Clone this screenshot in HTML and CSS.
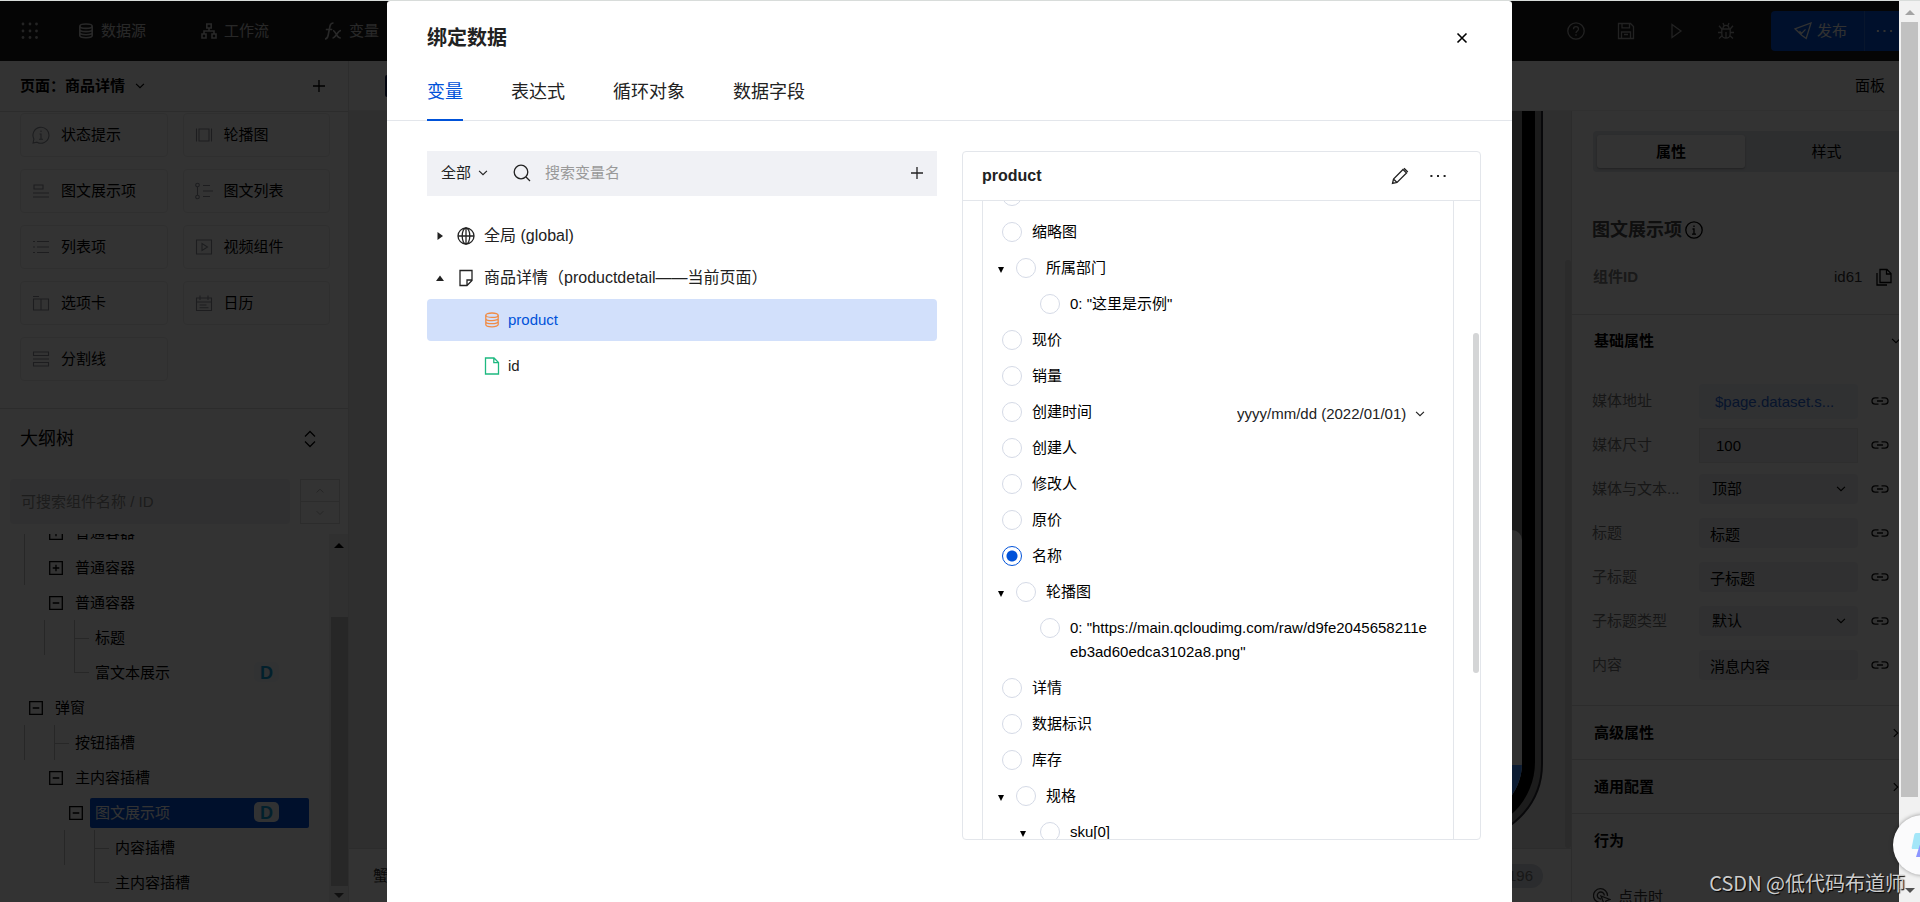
FILE: index.html
```html
<!DOCTYPE html>
<html lang="zh-CN">
<head>
<meta charset="utf-8">
<title>绑定数据</title>
<link rel="stylesheet" href="styles.css">
</head>
<body>
<svg class="sprite" aria-hidden="true">
  <symbol id="chev" viewBox="0 0 16 16"><path d="M3.5 5.5 8 10l4.5-4.5"/></symbol>
  <symbol id="chev-up" viewBox="0 0 16 16"><path d="M3.5 10 8 5.5l4.5 4.5"/></symbol>
  <symbol id="chev-r" viewBox="0 0 16 16"><path d="M5.5 3.5 10 8l-4.5 4.5"/></symbol>
  <symbol id="plus" viewBox="0 0 16 16"><path d="M8 2v12M2 8h12"/></symbol>
  <symbol id="db" viewBox="0 0 16 16"><ellipse cx="8" cy="3.2" rx="6.2" ry="2.2"/><path d="M1.8 3.2v9.4c0 1.2 2.8 2.2 6.2 2.2s6.2-1 6.2-2.2V3.2M1.8 6.4c0 1.2 2.8 2.2 6.2 2.2s6.2-1 6.2-2.2M1.8 9.5c0 1.2 2.8 2.2 6.2 2.2s6.2-1 6.2-2.2"/></symbol>
  <symbol id="link" viewBox="0 0 18 10"><path d="M7.5 1.8H4.2a3.2 3.2 0 0 0 0 6.4h3.3M10.5 1.8h3.3a3.2 3.2 0 0 1 0 6.4h-3.3M6 5h6"/></symbol>
  <symbol id="box-plus" viewBox="0 0 14 14"><path d="M.7.7h12.6v12.6H.7zM7 3.7v6.6M3.7 7h6.6"/></symbol>
  <symbol id="box-minus" viewBox="0 0 14 14"><path d="M.7.7h12.6v12.6H.7zM3.7 7h6.6"/></symbol>
  <symbol id="dots" viewBox="0 0 16 16"><path class="solid" d="M.4 7h2v2h-2zM7 7h2v2H7zM13.6 7h2v2h-2z"/></symbol>
</svg>

<div class="window">
<div class="app">
  <header class="topbar">
    <button class="top-icon apps" aria-label="应用"><svg width="18" height="18" viewBox="0 0 18 18"><g class="solid"><circle cx="2" cy="2" r="1.4"/><circle cx="9" cy="2" r="1.4"/><circle cx="15.500" cy="2" r="1.4"/><circle cx="2" cy="9" r="1.4"/><circle cx="9" cy="9" r="1.4"/><circle cx="15.500" cy="9" r="1.4"/><circle cx="2" cy="15.500" r="1.4"/><circle cx="9" cy="15.500" r="1.4"/><circle cx="15.500" cy="15.500" r="1.4"/></g></svg></button>
    <nav class="topnav">
      <a href="#ds"><svg class="bold" width="16" height="16"><use href="#db"/></svg>数据源</a>
      <a href="#flow"><svg class="bold" width="16" height="16" viewBox="0 0 16 16"><path d="M5.800 1h4.400v4H5.800zM1 11h4v4H1zM11 11h4v4h-4zM8 5v3M3 11V8h10v3"/></svg>工作流</a>
      <a href="#var"><svg class="bold" width="18" height="18" viewBox="0 0 18 18"><path d="M1 17c2.500 0 2.700-1.500 3.200-4L6 4c.4-2 1.200-3 3.500-3M1.800 7.500h6.500M9 8.500c3 0 3 7.500 7.800 7.500M17 8.500C13.500 8.500 12 16 8.500 16"/></svg>变量</a>
    </nav>
    <div class="tools">
      <button class="top-icon" aria-label="帮助"><svg width="18" height="18" viewBox="0 0 18 18"><circle cx="9" cy="9" r="8.200"/><path d="M6.500 7.200C6.500 3.800 11.500 4 11.500 7c0 1.800-2.500 2-2.500 4M9 12.300v1.500"/></svg></button>
      <button class="top-icon" aria-label="保存"><svg width="18" height="18" viewBox="0 0 18 18"><path d="M1.500 1.500h12l3 3v12h-15zM5 1.500v4.300h7.500V1.500M4.500 16v-6h9v6M7 12.500h4"/></svg></button>
      <button class="top-icon" aria-label="预览"><svg width="18" height="18" viewBox="0 0 18 18"><path d="M5 2.500v13L14 9z"/></svg></button>
      <button class="top-icon" aria-label="调试"><svg width="18" height="18" viewBox="0 0 18 18"><path d="M4.800 7h8.400v5a4.200 4.200 0 0 1-8.400 0zM6 6.800a3 3.500 0 0 1 6 0M9 10v6M1 10.500h3.800M13.200 10.500H17M2 3.800 4.800 7M16 3.800 13.200 7M2 16.500l3-2.700M16 16.500l-3-2.700M6 1l1 2.500M12 1l-1 2.500"/></svg></button>
    </div>
    <div class="publish">
      <button class="pub-main"><svg width="18" height="18" viewBox="0 0 18 18"><path d="M1 6.800 17 1l-4.800 15.500-4.500-3.300zM5.500 9.200l2.200 2.200 3.800-4"/></svg>发布</button>
      <button class="pub-more" aria-label="更多"><svg width="17" height="16"><use href="#dots"/></svg></button>
    </div>
  </header>

  <div class="workspace">
    <aside class="left">
      <div class="page-head"><button class="page-pick">页面：商品详情<svg width="14" height="14"><use href="#chev"/></svg></button><button aria-label="新建"><svg width="16" height="16"><use href="#plus"/></svg></button></div>
      <div class="palette">
        <button><svg width="18" height="18" viewBox="0 0 18 18"><path d="M1 17l.9-4A8 8 0 1 1 5 16.200zM9 4.500v1.500M7.500 8H9v5M7 13.200h4"/></svg>状态提示</button>
        <button><svg width="18" height="18" viewBox="0 0 18 18"><path d="M4 3h10v12H4zM1.500 2.500v13M16.500 2.500v13"/></svg>轮播图</button>
        <button><svg width="18" height="18" viewBox="0 0 18 18"><path d="M2 3h9v4H2zM1 11h16M1 15h16"/></svg>图文展示项</button>
        <button><svg width="18" height="18" viewBox="0 0 18 18"><circle cx="2.500" cy="3" r="1.800"/><circle cx="2.500" cy="15" r="1.800"/><path d="M2.500 5v8M8 3.500h7M8 9h10M8 14.500h7"/></svg>图文列表</button>
        <button><svg width="18" height="18" viewBox="0 0 18 18"><path d="M1 3.500h2M5 3.500h12M1 9h2M5 9h12M1 14.500h2M5 14.500h12"/></svg>列表项</button>
        <button><svg width="18" height="18" viewBox="0 0 18 18"><path d="M1.500 2h15v14h-15zM7 5.500v7L12.500 9z"/></svg>视频组件</button>
        <button><svg width="18" height="18" viewBox="0 0 18 18"><path d="M1.500 5h15v11h-15zM9 5v11M1 2.500h6"/></svg>选项卡</button>
        <button><svg width="18" height="18" viewBox="0 0 18 18"><path d="M1.500 4h15v12.500h-15zM1.500 8h15M5 1.500V6M13 1.500V6M4.500 11h7M4.500 13.800h9"/></svg>日历</button>
        <button><svg width="18" height="18" viewBox="0 0 18 18"><path d="M1.500 2h15v3.500h-15zM1 9h16M1.500 12.500h15V16h-15z"/></svg>分割线</button>
      </div>
      <div class="outline-head"><h2>大纲树</h2><button aria-label="展开"><svg width="14" height="18" viewBox="0 0 14 18"><path d="M2 6.500l5-5 5 5M2 11.500l5 5 5-5"/></svg></button></div>
      <div class="outline-search">
        <input type="text" aria-label="搜索组件" placeholder="可搜索组件名称 / ID">
        <div class="stepper"><button aria-label="上一个"><svg width="12" height="12"><use href="#chev-up"/></svg></button><button aria-label="下一个"><svg width="12" height="12"><use href="#chev"/></svg></button></div>
      </div>
      <div class="outline">
        <ul class="nodes">
          <li class="l1"><i class="guide"></i><svg width="14" height="14"><use href="#box-plus"/></svg><span>普通容器</span></li>
          <li class="l1"><i class="guide"></i><svg width="14" height="14"><use href="#box-plus"/></svg><span>普通容器</span></li>
          <li class="l2"><svg width="14" height="14"><use href="#box-minus"/></svg><span>普通容器</span></li>
          <li class="l3"><i class="guide wide"></i><i class="branch thru"></i>标题</li>
          <li class="l5"><i class="branch"></i>富文本展示<b class="tag">D</b></li>
          <li class="l0"><svg width="14" height="14"><use href="#box-minus"/></svg><span>弹窗</span></li>
          <li class="l1"><i class="guide wide"></i><i class="branch thru"></i>按钮插槽</li>
          <li class="l2"><svg width="14" height="14"><use href="#box-minus"/></svg><span>主内容插槽</span></li>
          <li class="l4"><svg width="14" height="14"><use href="#box-minus"/></svg><span class="picked">图文展示项</span><b class="tag">D</b></li>
          <li class="l6"><i class="guide wide"></i><i class="branch thru"></i>内容插槽</li>
          <li class="l7"><i class="branch"></i>主内容插槽</li>
        </ul>
        <div class="bar"><i class="tri up"></i><i class="thumb"></i><i class="tri down"></i></div>
      </div>
    </aside>

    <main class="main">
      <div class="strip"><i class="device"></i><a href="#panel">面板</a></div>
      <div class="stage-row">
        <section class="stage">
          <div class="canvas">
            <div class="phone"><div class="bezel"><div class="screen"><div class="sheet"><div class="foot"></div></div></div></div></div>
            <i class="stage-bar"></i>
          </div>
          <div class="stage-foot"><span>蟹</span><span class="zoom">196</span></div>
        </section>
        <aside class="props">
          <div class="seg"><button class="on">属性</button><button>样式</button></div>
          <h2>图文展示项<svg width="18" height="18" viewBox="0 0 18 18"><circle cx="9" cy="9" r="8.200"/><path d="M9 4.500V6M7.500 8H9v5M7 13.200h4"/></svg></h2>
          <div class="cid"><strong>组件ID</strong><span>id61</span><button aria-label="复制"><svg width="18" height="18" viewBox="0 0 18 18"><path d="M5 1.500h7l4 4v9H5zM11.500 1.500V6H16M2 5v12h10"/></svg></button></div>
          <section class="group">
            <h3>基础属性<svg width="14" height="14"><use href="#chev"/></svg></h3>
            <div class="field tall"><label for="f1">媒体地址</label><input id="f1" class="bound" type="text" value="$page.dataset.s..."><svg width="18" height="10"><use href="#link"/></svg></div>
            <div class="field tall"><label for="f2">媒体尺寸</label><input id="f2" class="num" type="text" value="100"><svg width="18" height="10"><use href="#link"/></svg></div>
            <div class="field"><label for="f3">媒体与文本...</label><span class="sel"><select id="f3"><option>顶部</option></select><svg width="14" height="14"><use href="#chev"/></svg></span><svg width="18" height="10"><use href="#link"/></svg></div>
            <div class="field"><label for="f4">标题</label><input id="f4" type="text" value="标题"><svg width="18" height="10"><use href="#link"/></svg></div>
            <div class="field"><label for="f5">子标题</label><input id="f5" type="text" value="子标题"><svg width="18" height="10"><use href="#link"/></svg></div>
            <div class="field"><label for="f6">子标题类型</label><span class="sel"><select id="f6"><option>默认</option></select><svg width="14" height="14"><use href="#chev"/></svg></span><svg width="18" height="10"><use href="#link"/></svg></div>
            <div class="field"><label for="f7">内容</label><input id="f7" type="text" value="消息内容"><svg width="18" height="10"><use href="#link"/></svg></div>
          </section>
          <h3 class="fold">高级属性<svg width="14" height="14"><use href="#chev-r"/></svg></h3>
          <h3 class="fold">通用配置<svg width="14" height="14"><use href="#chev-r"/></svg></h3>
          <h3 class="fold">行为</h3>
          <div class="event"><svg width="18" height="18" viewBox="0 0 18 18"><path d="M9 14.500A7 7 0 1 1 14.500 8M8 11a3.500 3.500 0 1 1 3.300-3.500M8 8l9 3.500-4 1.500-1.500 4z"/></svg>点击时</div>
        </aside>
      </div>
    </main>
  </div>
</div>

<div class="overlay">
  <div class="modal" role="dialog" aria-labelledby="dlg">
    <div class="modal-head"><h1 id="dlg">绑定数据</h1><button aria-label="关闭"><svg class="bold" width="16" height="16" viewBox="0 0 16 16"><path d="M3.500 3.500l9 9M12.500 3.500l-9 9"/></svg></button></div>
    <nav class="tabs"><button class="on">变量</button><button>表达式</button><button>循环对象</button><button>数据字段</button></nav>
    <div class="modal-body">
      <div class="vars">
        <div class="var-search">
          <span class="scope"><select aria-label="范围"><option>全部</option></select><svg width="14" height="14"><use href="#chev"/></svg></span>
          <svg width="18" height="18" viewBox="0 0 18 18"><circle cx="8" cy="8" r="6.800"/><path d="M13 13l4 4"/></svg>
          <input type="text" aria-label="搜索变量名" placeholder="搜索变量名">
          <button aria-label="新增"><svg width="16" height="16"><use href="#plus"/></svg></button>
        </div>
        <ul class="var-tree">
          <li class="root"><svg class="mark" width="10" height="10" viewBox="0 0 10 10"><path class="solid" d="M2.500 1v8L8 5z"/></svg><svg width="18" height="18" viewBox="0 0 18 18"><circle cx="9" cy="9" r="8"/><ellipse cx="9" cy="9" rx="3.800" ry="8"/><path d="M1 9h16M9 1v16"/></svg>全局 (global)</li>
          <li class="root"><svg class="mark" width="10" height="10" viewBox="0 0 10 10"><path class="solid" d="M1 8h8L5 2.500z"/></svg><svg width="18" height="18" viewBox="0 0 18 18"><path d="M3 1.500h12v10l-5 5H3zM10 16v-5h5"/></svg>商品详情（productdetail——当前页面）</li>
          <li class="leaf on"><svg class="orange" width="16" height="16"><use href="#db"/></svg>product</li>
          <li class="leaf"><svg class="green" width="16" height="18" viewBox="0 0 16 18"><path d="M1.500 1h8.500l4.500 4.500V17h-13zM9.800 1v4.700h4.700"/></svg>id</li>
        </ul>
      </div>
      <section class="card">
        <div class="card-head"><h2>product</h2><button aria-label="编辑"><svg width="18" height="18" viewBox="0 0 18 18"><path d="M1.500 16.500l1-4.500L12 2.500l3.500 3.500L6 15.500zM13 1.200 16.800 5M2.500 12 6 15.500"/></svg></button><button aria-label="更多"><svg width="16" height="16"><use href="#dots"/></svg></button></div>
        <div class="card-body">
          <div class="fields">
            <label class="row"><input type="radio" name="v"><span></span></label>
            <label class="row"><input type="radio" name="v"><span>缩略图</span></label>
            <label class="row arr"><i class="caret"></i><input type="radio" name="v"><span>所属部门</span></label>
            <label class="row sub"><input type="radio" name="v"><span>0: "这里是示例"</span></label>
            <label class="row"><input type="radio" name="v"><span>现价</span></label>
            <label class="row"><input type="radio" name="v"><span>销量</span></label>
            <div class="row split"><label><input type="radio" name="v"><span>创建时间</span></label><span class="fmt"><select aria-label="日期格式"><option>yyyy/mm/dd (2022/01/01)</option></select><svg width="14" height="14"><use href="#chev"/></svg></span></div>
            <label class="row"><input type="radio" name="v"><span>创建人</span></label>
            <label class="row"><input type="radio" name="v"><span>修改人</span></label>
            <label class="row"><input type="radio" name="v"><span>原价</span></label>
            <label class="row"><input type="radio" name="v" checked><span>名称</span></label>
            <label class="row arr"><i class="caret"></i><input type="radio" name="v"><span>轮播图</span></label>
            <label class="row sub"><input type="radio" name="v"><span>0: "https://main.qcloudimg.com/raw/d9fe2045658211eeb3ad60edca3102a8.png"</span></label>
            <label class="row"><input type="radio" name="v"><span>详情</span></label>
            <label class="row"><input type="radio" name="v"><span>数据标识</span></label>
            <label class="row"><input type="radio" name="v"><span>库存</span></label>
            <label class="row arr"><i class="caret"></i><input type="radio" name="v"><span>规格</span></label>
            <label class="row arr2"><i class="caret"></i><input type="radio" name="v"><span>sku[0]</span></label>
          </div>
          <i class="card-bar"></i>
        </div>
      </section>
    </div>
  </div>
</div>

<div class="scrollbar"><i class="tri up"></i><i class="thumb"></i><i class="tri down"></i></div>
<button class="assistant" aria-label="助手"><svg width="60" height="60" viewBox="0 0 60 60"><path class="cyan" d="M23 18h20l-5 16H20c-1.500 0-1.500-1-1-3l2-10c.3-2 1-3 2-3z"/><path class="violet" d="M28 26h16v16H23z"/></svg></button>
<div class="credit">CSDN @低代码布道师</div>
</div>
</body>
</html>
```

FILE: styles.css
```css
* { box-sizing: border-box; }
html, body { height: 100%; margin: 0; }
body {
  font: 15px/24px "Liberation Sans", "Noto Sans CJK SC", sans-serif;
  color: #000;
  overflow: hidden;
}
button, input, select {
  font: inherit; color: inherit; background: none; border: 0; padding: 0; margin: 0;
  outline: 0; appearance: none;
}
button { display: flex; align-items: center; }
a { color: inherit; text-decoration: none; }
ul { list-style: none; margin: 0; padding: 0; }
h1, h2, h3 { margin: 0; }
i { font-style: normal; }
svg { fill: none; stroke: currentColor; stroke-width: 1.3; flex: none; display: block; }
svg.bold { stroke-width: 1.6; }
.solid { fill: currentColor; stroke: none; }
.sprite { position: absolute; width: 0; height: 0; }

.window {
  position: relative; height: 100vh; overflow: hidden;
  display: grid; grid-template-columns: minmax(0, 1fr) 21px;
  border-top: 1px solid #d8dcda;
}
.app { grid-area: 1 / 1; display: flex; flex-direction: column; min-height: 0; height: calc(100vh - 1px); overflow: hidden; background: #fff; }

/* top bar */
.topbar { height: 60px; flex: none; background: #191919; color: #f5f5f5; display: flex; align-items: center; padding-left: 21px; }
.apps { width: 57px; opacity: .7; }
.topnav { display: flex; gap: 55px; flex: 1; }
.topnav a { display: flex; align-items: center; gap: 7px; opacity: .8; }
.tools { display: flex; gap: 32px; margin-right: 36px; opacity: .65; }
.publish { display: flex; height: 40px; background: #0052d9; border-radius: 4px 0 0 4px; }
.pub-main { gap: 5px; padding: 0 17px 0 23px; border-right: 1px solid #2a6ee0; }
.pub-more { padding-left: 11px; width: 34px; overflow: hidden; }

.workspace { flex: 1; display: flex; min-height: 0; }
.left { width: 349px; flex: none; display: flex; flex-direction: column; border-right: 1px solid #e0e0e0; }
.page-head { height: 51px; flex: none; border-bottom: 1px solid #dcdcdc; display: flex; align-items: center; justify-content: space-between; padding: 0 21px 0 20px; }
.page-pick { font-weight: bold; gap: 8px; }
.palette { display: grid; grid-template-columns: 1fr 1fr; gap: 12px 15px; padding: 1px 18px 27px 20px; border-bottom: 1px solid #dcdcdc; }
.palette button { height: 44px; border: 1px solid #ebebeb; border-radius: 4px; padding-left: 11px; gap: 11px; }
.palette svg { color: #8f939c; stroke-width: 1.1; }
.outline-head { display: flex; justify-content: space-between; align-items: center; height: 70px; flex: none; padding: 0 31px 10px 20px; }
.outline-head h2 { font-size: 18px; font-weight: normal; }
.outline-search { display: flex; gap: 10px; padding: 0 8px 0 10px; height: 45px; flex: none; }
.outline-search input { flex: 1; min-width: 0; background: #f1f1f2; border-radius: 4px; padding: 0 11px; }
.outline-search input::placeholder { color: #8c8c8c; }
.stepper { width: 40px; border: 1px solid #dcdcdc; display: flex; flex-direction: column; }
.stepper button { flex: 1; justify-content: center; color: #b4b4b4; }
.stepper button + button { border-top: 1px solid #dcdcdc; }
.outline { flex: 1; min-height: 0; margin-top: 10px; display: flex; overflow: hidden; }
.nodes { flex: 1; margin-top: -19px; }
.nodes li { height: 35px; display: flex; align-items: center; position: relative; white-space: nowrap; }
.nodes svg { margin-right: 12px; }
.l0 { padding-left: 29px; }
.l1 { padding-left: 24px; }
.l2 { padding-left: 49px; }
.l3 { padding-left: 44px; }
.l4 { padding-left: 69px; }
.l5 { padding-left: 74px; }
.l6 { padding-left: 64px; }
.l7 { padding-left: 94px; }
.guide { width: 25px; height: 35px; border-left: 1px solid #c4c4c4; }
.guide.wide { width: 30px; }
.branch { width: 21px; height: 35px; border-left: 1px solid #c4c4c4; background: linear-gradient(#c4c4c4, #c4c4c4) 0 18px / 14px 1px no-repeat; }
.branch:not(.thru) { height: 18px; align-self: flex-start; background-position: 0 100%; }
.nodes .l4 svg { margin-right: 7px; }
.picked { flex: 1; background: #0052d9; color: #fff; height: 30px; line-height: 30px; border-radius: 2px; padding-left: 5px; margin-right: 20px; }
.tag { position: absolute; left: 254px; top: 7px; width: 25px; height: 20px; border-radius: 5px; background: #f2f7ff; color: #0ea0dc; font: bold 18px/22px "Liberation Sans", sans-serif; text-align: center; }
.bar { width: 19px; background: #f1f1f1; display: flex; flex-direction: column; align-items: center; padding: 9px 0 4px; }
.bar .thumb { width: 17px; flex: 1; background: #c4c4c4; margin: 69px 0 7px 2px; }
.tri { width: 0; height: 0; border: 5px solid transparent; flex: none; }
.tri.up { border-top: 0; border-bottom-color: currentColor; }
.tri.down { border-bottom: 0; border-top-color: currentColor; }
.bar .down { color: #505050; }

/* stage */
.main { flex: 1; min-width: 0; display: flex; flex-direction: column; }
.strip { height: 50px; flex: none; display: flex; align-items: center; justify-content: space-between; padding: 0 14px 0 36px; border-bottom: 1px solid #f0f0f0; }
.device { width: 36px; height: 22px; border: 2px solid #0b1a4a; border-radius: 2px; }
.stage-row { flex: 1; min-height: 0; display: flex; }
.stage { flex: 1; min-width: 0; display: flex; flex-direction: column; }
.canvas { flex: 1; background: #ebebeb; position: relative; overflow: hidden; }
.phone { position: absolute; right: 28px; bottom: 8px; width: 420px; height: 860px; border: 2px solid #2c2c34; border-radius: 76px; background: #8c8c8c; padding: 6px; }
.bezel { height: 100%; background: #000; border-radius: 70px; padding: 13px; }
.screen { height: 100%; background: #878787; border-radius: 56px; overflow: hidden; display: flex; flex-direction: column; justify-content: flex-end; }
.sheet { height: 289px; background: #f2f2f2; border-radius: 10px 10px 0 0; display: flex; align-items: flex-end; }
.foot { height: 54px; width: 100%; background: #3c8cff; }
.stage-bar { position: absolute; right: 0; top: 149px; bottom: 0; width: 6px; border-radius: 3px; background: #d4d4d4; }
.stage-foot { height: 54px; flex: none; border-top: 1px solid #dcdcdc; display: flex; align-items: center; justify-content: space-between; padding: 0 28px 0 24px; color: #333; }
.zoom { background: #d5d9e3; border-radius: 12px; padding: 0 10px; color: #777; }

/* inspector */
.props { width: 328px; flex: none; border-left: 1px solid #dcdcdc; overflow: hidden; }
.props > * { width: 340px; }
.props .seg { margin: 20px 0 0 21px; width: 319px; height: 41px; padding: 4px; background: #dfe3e8; border-radius: 4px; display: flex; }
.seg button { flex: 0 0 148px; justify-content: center; }
.seg button + button { flex-basis: 163px; }
.seg .on { font-weight: bold; background: #fff; border-radius: 3px; box-shadow: 0 1px 2px #0004; }
.props h2 { font-size: 18px; color: #4b4b4b; display: flex; align-items: center; gap: 3px; padding: 46px 0 0 20px; }
.props h2 svg { color: #000; }
.cid { display: flex; align-items: center; height: 74px; padding-left: 21px; margin-top: -2px; }
.cid strong { color: #7d7d7d; width: 241px; }
.cid button { margin-left: 13px; }
.cid span { color: #333; }
.group { border-top: 1px solid #dcdcdc; padding-bottom: 18px; }
.props h3 { font-size: 15px; line-height: 52px; height: 52px; padding-left: 22px; display: flex; align-items: center; justify-content: space-between; padding-right: 9px; }
.group h3 { margin-bottom: 12px; }
.field { display: flex; align-items: center; height: 44px; padding-left: 20px; color: #000; }
.field label { width: 107px; color: #757575; }
.field input, .field .sel { width: 159px; height: 30px; background: #f0f1f2; border-radius: 4px; margin-right: 13px; padding-left: 11px; }
.field > svg { color: #111; }
.field.tall input { height: 35px; padding-left: 16px; }
.field .bound { background: #eef2fb; color: #2a69dc; }
.field .num { border: 1px solid #e4e4e4; border-radius: 0; }
.sel { display: flex; align-items: center; }
.sel select { flex: 1; padding-left: 2px; }
.sel svg { margin-right: 10px; }
.props .fold { border-top: 1px solid #dcdcdc; height: 54px; }
.event { display: flex; align-items: center; gap: 7px; padding: 18px 0 0 21px; color: #333; white-space: nowrap; }

/* dialog */
.overlay { grid-area: 1 / 1; position: relative; background: rgba(0, 0, 0, .8); height: calc(100vh - 1px); padding: 0 16px; }
.modal { max-width: 1125px; height: 100%; margin: 0 auto; background: #fff; border-radius: 3px 3px 0 0; display: flex; flex-direction: column; }
.modal-head { display: flex; justify-content: space-between; align-items: center; height: 60px; flex: none; padding: 14px 42px 0 40px; }
.modal h1 { font-size: 20px; color: #222; }
.tabs { display: flex; gap: 48px; height: 60px; flex: none; padding: 0 40px; border-bottom: 1px solid #e3e6eb; font-size: 18px; color: #222; }
.tabs button { height: 60px; padding-top: 2px; }
.tabs .on { color: #0052d9; border-bottom: 2px solid #0052d9; padding-top: 4px; }
.modal-body { flex: 1; min-height: 0; display: grid; grid-template-columns: 510fr 519fr; gap: 25px; padding: 30px 31px 62px 40px; }
.var-search { display: flex; align-items: center; height: 45px; background: #f0f1f5; padding: 0 12px 2px 14px; color: #222; }
.scope, .fmt { display: flex; align-items: center; gap: 6px; }
.scope { gap: 4px; margin-right: 23px; }
.var-search input { flex: 1; min-width: 0; padding-left: 14px; }
.var-search input::placeholder { color: #999; }
.var-tree { padding-top: 19px; color: #222; }
.root { display: flex; align-items: center; height: 42px; font-size: 16px; padding-left: 8px; }
.root .mark { margin-right: 12px; }
.root svg + svg { margin-right: 9px; }
.leaf { display: flex; align-items: center; height: 42px; gap: 8px; padding-left: 57px; margin-bottom: 4px; }
.leaf.on { background: #d2e0fb; border-radius: 4px; color: #0052d9; }
.orange { color: #f08c46; }
.green { color: #1eb980; }
.card { border: 1px solid #e3e6eb; border-radius: 4px; display: flex; flex-direction: column; overflow: hidden; min-height: 0; }
.card-head { height: 49px; flex: none; border-bottom: 1px solid #e3e6eb; display: flex; align-items: center; gap: 21px; padding: 0 34px 0 19px; color: #222; }
.card-head h2 { font-size: 16px; flex: 1; }
.card-body { flex: 1; min-height: 0; overflow: hidden; position: relative; padding: 0 26px 0 19px; }
.fields { border: 1px solid #e3e6eb; border-width: 0 1px; margin-top: -23px; }
.row { display: flex; align-items: flex-start; min-height: 36px; padding: 6px 26px 6px 19px; }
.row input { width: 20px; height: 20px; border: 1px solid #d5dae6; border-radius: 50%; flex: none; margin: 2px 10px 0 0; }
.row input:checked { border-color: #0052d9; background: radial-gradient(circle, #0052d9 5px, #fff 6px); }
.row span { word-break: break-all; }
.arr { padding-left: 14px; }
.sub { padding-left: 57px; }
.arr2 { padding-left: 37px; }
.caret { border: 3px solid transparent; border-top: 6px solid #000; border-bottom: 0; margin: 11px 12px 0 1px; }
.arr2 .caret { margin-right: 14px; margin-left: 0; }
.split { justify-content: space-between; align-items: center; padding-top: 0; padding-bottom: 0; height: 36px; }
.split label { display: flex; align-items: flex-start; }
.split .fmt { color: #222; padding-top: 4px; }
.card-bar { position: absolute; right: 1px; top: 132px; width: 6px; height: 340px; border-radius: 3px; background: #d4d5d6; }

.scrollbar { grid-area: 1 / 2; background: #f1f1f1; height: calc(100vh - 1px); display: flex; flex-direction: column; align-items: center; padding: 9px 0; color: #a3a3a3; }
.scrollbar .thumb { width: 17px; flex: 1; background: #c1c1c1; margin: 7px 0 91px; }
.scrollbar .down { color: #505050; }
.assistant { position: absolute; right: -33px; bottom: 27px; width: 60px; height: 60px; border-radius: 50%; background: #fbfbfc; box-shadow: 0 0 4px #0006; }
.assistant path { stroke: none; }
.cyan { fill: #a4e6f8; }
.violet { fill: #8c96ff; }
.credit { position: absolute; right: 15px; bottom: 4px; font: 20px/30px "Liberation Sans", "Noto Sans CJK SC", sans-serif; font-family: "Noto Sans CJK SC", sans-serif; color: #ccc; text-shadow: 1px 1px 1px #000; }
```
